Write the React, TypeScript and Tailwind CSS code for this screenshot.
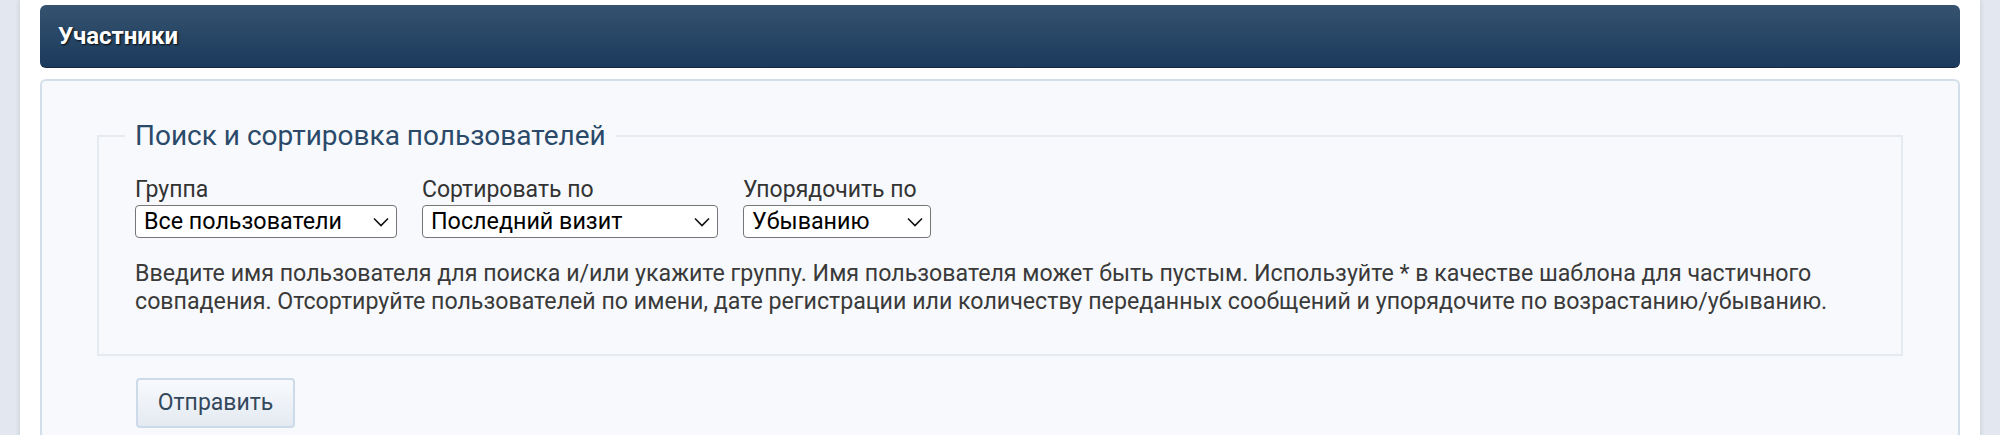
import React from "react";

function Select({ value, width, options }: { value: string; width: string; options: string[] }) {
  return (
    <div className={`relative ${width}`}>
      <select
        defaultValue={value}
        className="h-[33px] w-full appearance-none rounded-[4px] border border-[#767676] bg-white pl-[8px] pr-[30px] text-[23.3px] leading-[31px] text-black outline-none"
      >
        {options.map((o) => (
          <option key={o}>{o}</option>
        ))}
      </select>
      <svg
        className="pointer-events-none absolute right-[8px] top-[12px]"
        width="16"
        height="10"
        viewBox="0 0 16 10"
        fill="none"
      >
        <path d="M1 1.5 L8 8.5 L15 1.5" stroke="#111" strokeWidth="1.6" />
      </svg>
    </div>
  );
}

export default function App() {
  return (
    <div className="min-h-[435px] bg-[#e3e7ef] px-[20px] font-['Roboto',sans-serif]">
      <div className="min-h-[435px] bg-white px-[20px] pt-[5px] shadow-[0_0_5px_rgba(60,70,100,0.18)]">
        <div className="flex h-[63px] items-center rounded-[6px] border-b border-[#13283f] bg-gradient-to-b from-[#35536f] to-[#1b3a5c] pl-[18px]">
          <h2 className="text-[24px] font-bold text-white [text-shadow:1px_1px_2px_rgba(0,0,0,0.9)]">
            Участники
          </h2>
        </div>
        <div className="mt-[11px] rounded-t-[6px] border-2 border-b-0 border-[#d2deea] bg-[#f7f9fc] px-[55px] pt-[1px] pb-[10px]">
          <fieldset className="mt-[37px] border-2 border-[#e6ebf2] pl-[36px] pr-[36px] pt-[25px] pb-[39px]">
            <legend className="-ml-[10px] px-[10px] text-[28px] leading-[34px] text-[#2b4a6a]">
              Поиск и сортировка пользователей
            </legend>
            <div className="flex gap-[25px]">
              <div className="flex flex-col gap-[3px]">
                <label className="text-[23px] leading-[24px] text-[#333]">Группа</label>
                <Select
                  value="Все пользователи"
                  width="w-[262px]"
                  options={["Все пользователи", "Администраторы", "Модераторы"]}
                />
              </div>
              <div className="flex flex-col gap-[3px]">
                <label className="text-[23px] leading-[24px] text-[#333]">Сортировать по</label>
                <Select
                  value="Последний визит"
                  width="w-[296px]"
                  options={["Имя пользователя", "Дата регистрации", "Последний визит", "Сообщения"]}
                />
              </div>
              <div className="flex flex-col gap-[3px]">
                <label className="text-[23px] leading-[24px] text-[#333]">Упорядочить по</label>
                <Select value="Убыванию" width="w-[188px]" options={["Возрастанию", "Убыванию"]} />
              </div>
            </div>
            <p className="mt-[21px] text-[23.2px] leading-[28px] text-[#3a3a3a]">
              Введите имя пользователя для поиска и/или укажите группу. Имя пользователя может быть пустым.
              Используйте * в качестве шаблона для частичного совпадения. Отсортируйте пользователей по имени,
              дате регистрации или количеству переданных сообщений и упорядочите по возрастанию/убыванию.
            </p>
          </fieldset>
          <div className="mt-[22px] pl-[39px]">
            <button className="h-[50px] w-[159px] rounded-[4px] border-2 border-[#cddaea] bg-gradient-to-b from-[#f8fafd] to-[#e4eaf2] text-[23px] text-[#34485c]">
              Отправить
            </button>
          </div>
        </div>
      </div>
    </div>
  );
}
